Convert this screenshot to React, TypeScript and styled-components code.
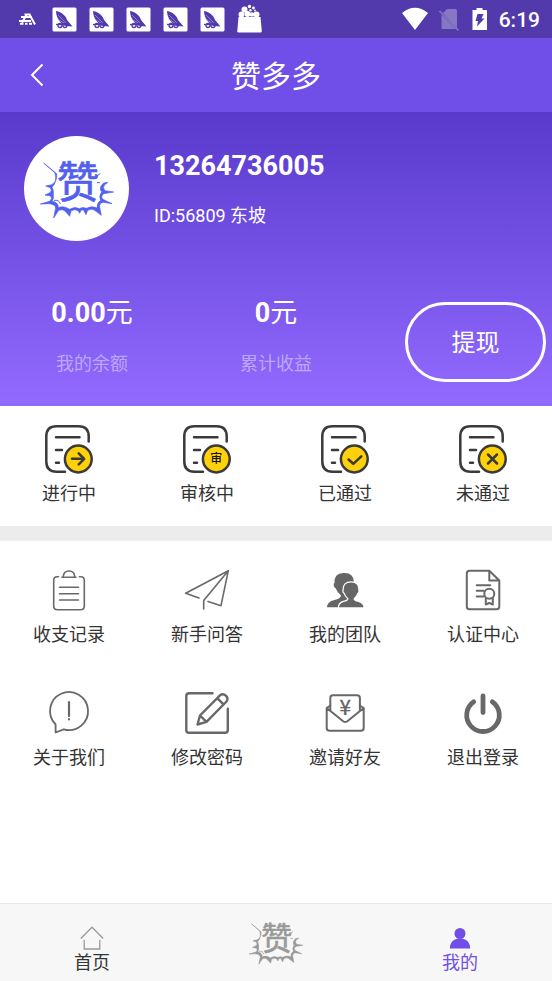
import React from "react";
import styled, { createGlobalStyle } from "styled-components";

const GlobalStyle = createGlobalStyle`
  * { box-sizing: border-box; }
  body {
    margin: 0;
    background: #fff;
    color: #333;
    font-family: Roboto, "Noto Sans CJK SC", sans-serif;
  }
  button { font: inherit; color: inherit; background: none; border: 0; padding: 0; cursor: pointer; }
  a { color: inherit; text-decoration: none; }
  svg { display: block; flex: none; overflow: visible; }
`;

const Page = styled.div`
  min-height: 100vh;
  display: flex;
  flex-direction: column;
`;

const StatusBar = styled.div`
  display: flex;
  align-items: center;
  justify-content: space-between;
  height: 38px;
  padding: 0 12px 0 16px;
  background: #5239ac;
  color: #fff;
`;

const Notices = styled.div`
  display: flex;
  align-items: center;
  gap: 12px;
`;

const Signals = styled.div`
  display: flex;
  align-items: center;
  gap: 11px;
`;

const Clock = styled.time`
  padding-top: 2px;
  font-size: 21px;
  font-weight: 500;
  line-height: 26px;
`;

const TitleBar = styled.header`
  display: grid;
  grid-template-columns: 74px 1fr 74px;
  align-items: center;
  height: 74px;
  background: #704ee8;
  color: #fff;
`;

const BackButton = styled.button`
  display: flex;
  justify-content: center;
`;

const Title = styled.h1`
  margin: 0;
  padding-top: 4px;
  text-align: center;
  font-size: 30px;
  line-height: 40px;
  font-weight: 400;
`;

const Hero = styled.section`
  background: linear-gradient(#583acc, #936aff);
  color: #fff;
  padding: 24px 6px 24px 0;
`;

const Profile = styled.div`
  display: flex;
  gap: 25px;
  padding-left: 24px;
`;

const Avatar = styled.div`
  display: flex;
  align-items: center;
  justify-content: center;
  width: 105px;
  height: 105px;
  border-radius: 50%;
  background: #fff;
  color: #5260ee;
`;

const Identity = styled.div`
  padding-top: 12px;
`;

const Phone = styled.div`
  font-size: 27px;
  line-height: 36px;
  font-weight: 700;
`;

const UserId = styled.div`
  margin-top: 20px;
  font-size: 18px;
  line-height: 24px;
`;

const Wallet = styled.div`
  display: flex;
  align-items: flex-start;
  margin-top: 54px;
`;

const Balance = styled.div`
  flex: 184;
  text-align: center;
`;

const Amount = styled.div`
  font-size: 27px;
  line-height: 36px;
  b { font-weight: 700; }
`;

const AmountLabel = styled.div`
  margin-top: 20px;
  font-size: 18px;
  line-height: 26px;
  color: rgba(255, 255, 255, 0.45);
`;

const WithdrawArea = styled.div`
  flex: 178;
  display: flex;
  justify-content: flex-end;
  padding-top: 7px;
`;

const WithdrawButton = styled.button`
  width: 141px;
  height: 80px;
  padding-bottom: 4px;
  border: 3px solid #fff;
  border-radius: 40px;
  font-size: 24px;
`;

const Grid = styled.nav<{ $top: number; $rowGap?: number }>`
  display: grid;
  grid-template-columns: repeat(4, 1fr);
  row-gap: ${(p) => p.$rowGap ?? 0}px;
  padding: ${(p) => p.$top}px 0 19px;
`;

const Entry = styled.a<{ $gap: number }>`
  display: flex;
  flex-direction: column;
  align-items: center;
  gap: ${(p) => p.$gap}px;
  font-size: 18px;
  line-height: 26px;
`;

const Divider = styled.div`
  height: 15px;
  background: #ececec;
`;

const Spacer = styled.div`
  flex: 1;
`;

const TabBar = styled.nav`
  display: grid;
  grid-template-columns: repeat(3, 1fr);
  height: 78px;
  background: #f7f7f7;
  border-top: 1px solid #e7e7e7;
`;

const Tab = styled.a<{ $active?: boolean }>`
  display: flex;
  flex-direction: column;
  align-items: center;
  justify-content: center;
  padding-top: 16px;
  font-size: 18px;
  line-height: 26px;
  color: ${(p) => (p.$active ? "#704ee8" : "#333")};
`;

const CenterTab = styled(Tab)`
  padding-top: 0;
  color: #999;
`;

function BurstLogo({ width, height }: { width: number; height: number }) {
  return (
    <svg width={width} height={height} viewBox="66 106 228 186" role="img" aria-label="赞多多">
      <g fill="currentColor" stroke="currentColor" strokeLinejoin="round" strokeLinecap="round">
        <path
          strokeWidth="2"
          d="M81 122 L119 153 Q122 176 104 186 L86 190 L100 195 Q106 204 99 210 L84 217 L101 220
             Q107 228 98 236 L70 244 L98 243 Q116 246 116 256 L110 286 L125 263 Q136 258 144 265
             L158 281 L162 265 Q174 257 184 265 L188 272 L192 263 L199 261 L207 276 L212 263
             Q224 256 233 263 L253 278 L248 254 Q246 242 258 239 L285 243 L260 231 Q248 224 260 213
             L290 208 L264 204 Q256 196 262 187 L273 179 L260 181 Q246 192 252 206 Q260 204 254 208
             Q244 220 251 233 Q240 240 240 256 Q224 248 208 257 Q198 252 187 258 Q172 250 158 260
             Q140 248 124 255 Q124 238 105 236 Q113 224 107 216 Q112 204 105 194 Q122 178 114 151 Z"
        />
        <path fill="none" strokeWidth="3" d="M112 233 Q126 230 130 243 M106 205 Q112 212 108 220 M240 160 L249 153 M241 180 L248 180" />
        <text
          x="183"
          y="227"
          textAnchor="middle"
          fontSize="128"
          fontWeight="400"
          fontFamily='"Noto Sans CJK SC", sans-serif'
          strokeWidth="2"
        >
          赞
        </text>
      </g>
    </svg>
  );
}

const RoadIcon = () => (
  <svg width="24" height="24" viewBox="0 0 24 24" fill="none" stroke="#fff" strokeWidth="2">
    <path d="M5 10h11M8.500 7.500h6M10.500 8 6 15.500M13.500 7.500l5.500 10M3 14h12M4 16.800h3.500M9 16.800h2.500M13 16.800h3" />
  </svg>
);

const BirdIcon = () => (
  <svg width="25" height="25" viewBox="0 0 25 25">
    <rect x="0.500" y="0.500" width="24" height="24" rx="1.500" fill="#fff" />
    <path d="M4 4c6 1 10 5 11 9l5.500 6.500-6-.500c-2 0-5-2-7-5C5.500 11 4 8 4 4z" fill="#5239ac" />
    <path d="M6 8l8 8M5.500 12l8 5" stroke="#a99be0" strokeWidth="0.700" />
    <g fill="none" stroke="#5239ac" strokeWidth="1.300">
      <circle cx="8" cy="18.500" r="2" />
      <circle cx="13" cy="18.500" r="2" />
      <path d="M4 17.500h13" />
    </g>
  </svg>
);

const BasketIcon = () => (
  <svg width="25" height="30" viewBox="0 0 25 30" fill="#fff">
    <path d="M1.500 13h22l1.300 14q0 1.500-1.500 1.500H1.700Q.200 28.500.300 27z" />
    <circle cx="4.500" cy="10.500" r="3" />
    <circle cx="10.500" cy="10" r="3" />
    <circle cx="19.500" cy="10.500" r="3" />
    <circle cx="7.500" cy="5.500" r="3" />
    <circle cx="15" cy="10.500" r="2.300" />
    <circle cx="12.500" cy="2.500" r="1.700" />
    <circle cx="16.500" cy="4" r="1.400" />
    <circle cx="13.500" cy="6.300" r="1.200" />
    <circle cx="18" cy="6.500" r="0.900" />
  </svg>
);

const WifiIcon = () => (
  <svg width="26" height="24" viewBox="0 0 26 24">
    <path d="M0 6Q13-4.500 26 6L13 23z" fill="#fff" />
  </svg>
);

const NoSimIcon = () => (
  <svg width="22" height="24" viewBox="0 0 22 24">
    <path d="M8 2h8.500Q18 2 18 3.500v18L4 6zM2.500 7.500 17 22H4Q2.500 22 2.500 20.500z" fill="#8677c5" />
    <path d="M.500 4 19.500 23.500" stroke="#8677c5" strokeWidth="1.700" />
  </svg>
);

const BatteryIcon = () => (
  <svg width="16" height="24" viewBox="0 0 16 24">
    <path d="M4.500 1h6v2H15v20H.500V3h4z" fill="#fff" />
    <path d="M5.500 7h6L9.500 11.500h3L5 19.500l1-5.500H3.500z" fill="#5239ac" />
  </svg>
);

type Mark = "arrow" | "review" | "check" | "cross";

function RecordIcon({ mark }: { mark: Mark }) {
  return (
    <svg width="48" height="48" viewBox="0 0 48 48" fill="none" stroke="#3a3a3a" strokeWidth="2.500" strokeLinecap="round" strokeLinejoin="round">
      <path d="M43.700 16.500V11.500Q43.700 1.300 33.500 1.300H11.500Q1.300 1.300 1.300 11.500V36.500Q1.300 46.700 11.500 46.700H20" />
      <path d="M11 12.300h23.500M11 25h6M11 37.700h3" />
      <circle cx="33.300" cy="34" r="13.400" fill="#ffd10a" />
      {mark === "arrow" && <path d="M27 33.800h12M33.700 28.300l5.500 5.500-5.500 5.500" />}
      {mark === "check" && <path d="M27.500 34.500l4.800 4.300 8-7.500" />}
      {mark === "cross" && <path d="M29 29.500l9 9M38 29.500l-9 9" />}
      {mark === "review" && (
        <text x="33.300" y="38.400" textAnchor="middle" fontSize="12" fontWeight="500" fill="#111" stroke="none" fontFamily='"Noto Sans CJK SC", sans-serif'>
          审
        </text>
      )}
    </svg>
  );
}

function LineIcon({ weight = 1.6, children }: { weight?: number; children: React.ReactNode }) {
  return (
    <svg width="48" height="48" viewBox="0 0 48 48" fill="none" stroke="#686868" strokeWidth={weight} strokeLinecap="round" strokeLinejoin="round">
      {children}
    </svg>
  );
}

const ClipboardIcon = () => (
  <LineIcon>
    <path d="M13.500 9.800H12Q8.700 9.800 8.700 13.500V39Q8.700 42.800 12.500 42.800H35.500Q39.300 42.800 39.300 39V13.500Q39.300 9.800 36 9.800H34.500" />
    <path d="M17 10.300h14M18.200 10Q18.500 4 24 4t5.800 6M14.500 20.300h19M14.500 26.700h19M14.500 33h19" />
  </LineIcon>
);

const PlaneIcon = () => (
  <LineIcon>
    <path d="M16 31 2.700 26.300 45.300 3.700 38 38.700 25 34.500M20.700 42V33.500L45.300 3.700" />
  </LineIcon>
);

const TeamIcon = () => (
  <svg width="48" height="48" viewBox="0 0 48 48" fill="#666">
    <path d="M6 40.500Q6 34.500 13.500 33 19.500 31.500 20 28.500 16 25 14.500 21 12.500 20.500 12.700 17.500 12.800 16 13.500 16 13 6 22.500 6 33 5.500 33 15.500V40.500z" />
    <path
      d="M18 40.500Q18 36.500 22.500 35 27.500 34 27.500 31.500 24.500 29 23.700 26 22 25 22.700 22.500 22.500 15.500 30 15.500T37.300 22.500Q38 25 36.300 26 35.500 29 32.500 31.500 32.500 34 37.500 35 42.500 36.500 42.500 40.500z"
      stroke="#fff"
      strokeWidth="2.400"
      paintOrder="stroke"
    />
    <path d="M0 40.500h48v7H0z" fill="#fff" />
  </svg>
);

const CertificateIcon = () => (
  <LineIcon weight={2}>
    <path d="M30.300 3.700H10.500Q7.800 3.700 7.800 6.500V39.500Q7.800 42.300 10.500 42.300H37.500Q40.300 42.300 40.300 39.500V13.500zV13.500h10" />
    <path d="M17.700 18.300h13.500M17.700 23.700h7M17.700 29.500h7" />
    <circle cx="30.300" cy="26.700" r="5" />
    <path d="M26.800 31v6.500l3.500-1.500 3.500 1.500V31" />
  </LineIcon>
);

const AboutIcon = () => (
  <LineIcon weight={1.8}>
    <path d="M10.600 42.500V34.500A19 19 0 1 1 18.700 39.300z" />
    <path d="M24 12v14M24 29.200v.300" strokeWidth="2.200" />
  </LineIcon>
);

const EditIcon = () => (
  <LineIcon weight={2.4}>
    <path d="M29.500 3.200H6Q3.300 3.200 3.300 6V40Q3.300 42.800 6 42.800H42Q44.800 42.800 44.800 40V18.700" />
    <path d="M14.500 34.500 17 25.500 37 5.300Q40 3 42.900 5.700 45.700 8.500 43.500 11.500L23.500 31.800zM17 25.500l6.500 6.300M34.500 8.300l6 6" />
  </LineIcon>
);

const InviteIcon = () => (
  <LineIcon weight={2}>
    <path d="M9.300 20.500V8Q9.300 5.300 12 5.300H36Q38.900 5.300 38.900 8V20.500" />
    <path d="M9.300 15.500 5.700 18V38Q5.700 40.800 8.500 40.800H40Q42.700 40.800 42.700 38V18L38.900 15.500M5.700 18 22.500 31.500Q24.200 32.700 26 31.500L42.700 18" />
    <text x="24.200" y="25" textAnchor="middle" fontSize="21" fontWeight="500" fill="#686868" stroke="none" fontFamily='"Noto Sans CJK SC", sans-serif'>
      ¥
    </text>
  </LineIcon>
);

const PowerIcon = () => (
  <LineIcon weight={4.8}>
    <path d="M24 6v16.500M14.700 11.800A16.300 16.300 0 1 0 33.300 11.800" />
  </LineIcon>
);

const HomeIcon = () => (
  <svg width="24" height="24" viewBox="0 0 24 24" fill="none" stroke="#999" strokeWidth="1.300">
    <path d="M.800 12.500 12 1.200 23.200 12.500M4.200 14v9h15.600v-9" />
  </svg>
);

const UserIcon = () => (
  <svg width="24" height="24" viewBox="0 0 24 24" fill="#704ee8">
    <circle cx="12" cy="7.500" r="5.500" />
    <path d="M1.800 22.500Q2 14.500 9 12.800h6q7 1.700 7.200 9.700z" />
  </svg>
);

const records: { label: string; mark: Mark }[] = [
  { label: "进行中", mark: "arrow" },
  { label: "审核中", mark: "review" },
  { label: "已通过", mark: "check" },
  { label: "未通过", mark: "cross" },
];

const services = [
  { label: "收支记录", Icon: ClipboardIcon },
  { label: "新手问答", Icon: PlaneIcon },
  { label: "我的团队", Icon: TeamIcon },
  { label: "认证中心", Icon: CertificateIcon },
  { label: "关于我们", Icon: AboutIcon },
  { label: "修改密码", Icon: EditIcon },
  { label: "邀请好友", Icon: InviteIcon },
  { label: "退出登录", Icon: PowerIcon },
];

export default function App() {
  return (
    <Page>
      <GlobalStyle />
      <StatusBar>
        <Notices>
          <RoadIcon />
          {[0, 1, 2, 3, 4].map((n) => (
            <BirdIcon key={n} />
          ))}
          <BasketIcon />
        </Notices>
        <Signals>
          <WifiIcon />
          <NoSimIcon />
          <BatteryIcon />
          <Clock>6:19</Clock>
        </Signals>
      </StatusBar>
      <TitleBar>
        <BackButton aria-label="返回">
          <svg width="14" height="24" viewBox="0 0 14 24" fill="none" stroke="#fff" strokeWidth="2">
            <path d="M12.500 1.500 2 12l10.500 10.500" />
          </svg>
        </BackButton>
        <Title>赞多多</Title>
      </TitleBar>
      <Hero>
        <Profile>
          <Avatar>
            <BurstLogo width={76} height={62} />
          </Avatar>
          <Identity>
            <Phone>13264736005</Phone>
            <UserId>ID:56809 东坡</UserId>
          </Identity>
        </Profile>
        <Wallet>
          <Balance>
            <Amount><b>0.00</b>元</Amount>
            <AmountLabel>我的余额</AmountLabel>
          </Balance>
          <Balance>
            <Amount><b>0</b>元</Amount>
            <AmountLabel>累计收益</AmountLabel>
          </Balance>
          <WithdrawArea>
            <WithdrawButton>提现</WithdrawButton>
          </WithdrawArea>
        </Wallet>
      </Hero>
      <Grid $top={19}>
        {records.map((r) => (
          <Entry key={r.label} href="#" $gap={8}>
            <RecordIcon mark={r.mark} />
            {r.label}
          </Entry>
        ))}
      </Grid>
      <Divider />
      <Grid $top={26} $rowGap={42}>
        {services.map(({ label, Icon }) => (
          <Entry key={label} href="#" $gap={7}>
            <Icon />
            {label}
          </Entry>
        ))}
      </Grid>
      <Spacer />
      <TabBar>
        <Tab href="#">
          <HomeIcon />
          首页
        </Tab>
        <CenterTab href="#">
          <BurstLogo width={56} height={46} />
        </CenterTab>
        <Tab href="#" $active>
          <UserIcon />
          我的
        </Tab>
      </TabBar>
    </Page>
  );
}
